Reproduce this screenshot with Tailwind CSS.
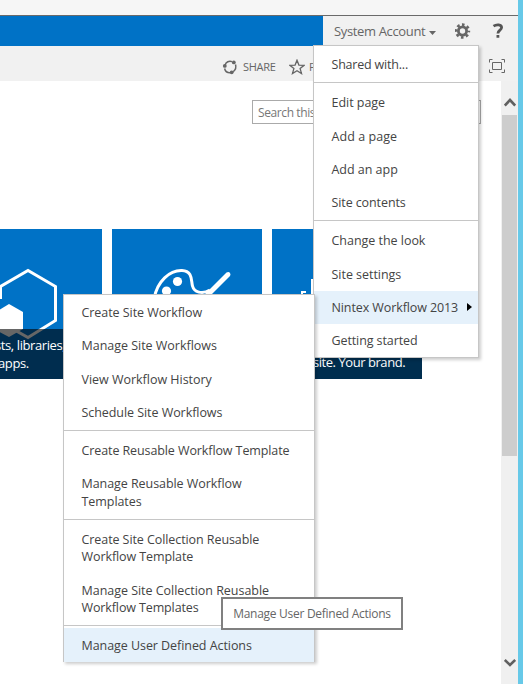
<!DOCTYPE html>
<html lang="en">
<head>
<meta charset="utf-8">
<title>Site settings menu</title>
<script src="https://cdn.jsdelivr.net/npm/@tailwindcss/browser@4"></script>
</head>
<body class="relative flex h-[684px] w-[523px] overflow-hidden bg-white font-['Open_Sans','Noto_Sans',sans-serif] text-[12.5px] text-[#444]">
<div class="flex w-[518px] flex-col">
  <div class="h-4 shrink-0 border-b border-[#6a6a6a] bg-[#f6f6f6]"></div>
  <header class="flex h-[30px] shrink-0 bg-[#f1f1f1]">
    <div class="w-[323px] bg-[#0072c6]"></div>
    <div class="flex flex-1 items-center pl-[11px] text-[#666]">
      <span class="w-[95px] whitespace-nowrap text-[13px] leading-[18px] tracking-[-0.35px]">System Account</span>
      <svg class="mt-[3px] h-1 w-[7px]" viewBox="0 0 7 4"><path d="M0 0h7L3.500 4z" fill="#666"/></svg>
      <svg class="ml-[19px] h-4 w-4" viewBox="0 0 16 16" fill="none" stroke="#666"><circle cx="7.500" cy="8" r="4.100" stroke-width="2.800"/><circle cx="7.500" cy="8" r="6.400" stroke-width="2.600" stroke-dasharray="2.600 2.426" stroke-dashoffset="1.300"/></svg>
      <svg class="ml-[21px] h-4 w-3" viewBox="0 0 12 16" fill="none" stroke="#555" stroke-width="2.800"><path d="M1.500 3.200C4.500 1.200 9.600 1.300 9.600 4.600C9.600 7.200 5.900 7.300 5.900 10.600M5.900 12v2.700"/></svg>
    </div>
  </header>
  <div class="flex h-[35px] shrink-0 items-center bg-[#f1f1f1] pl-[222px] text-[11px] text-[#666]">
    <svg class="mt-[7px] h-4 w-4" viewBox="0 0 16 16" fill="none" stroke="#666"><path d="M3.100 6C4 2.800 7 1.700 10 2.600M13.500 5.500C14.500 8.500 13.200 11 11.200 12.700M8.500 13.800C5.500 14 3.300 12.500 2.600 9.500" stroke-width="1.500"/><g fill="#666" stroke="none"><circle cx="11.800" cy="3.400" r="1.900"/><circle cx="2.800" cy="6.900" r="1.900"/><circle cx="9.700" cy="13.300" r="1.900"/></g></svg>
    <span class="ml-[5px] mt-[7px] w-[46px] tracking-[-0.3px]">SHARE</span>
    <svg class="mt-[7px] h-4 w-4 shrink-0" viewBox="0 0 16 16" fill="none" stroke="#666" stroke-width="1.300"><path d="M8 1.200l1.900 4.900 5.200.2-4 3.200 1.400 5L8 11.700l-4.500 2.800 1.400-5-4-3.200 5.200-.2z"/></svg>
    <span class="ml-[4px] mt-[7px] w-[180px] shrink-0">F</span>
    <svg class="mt-[5px] h-[14px] w-4 shrink-0" viewBox="0 0 16 14" fill="none" stroke="#666"><path d="M.5 3.500v-3h3M12.500.5h3v3M15.500 10.500v3h-3M3.500 13.500h-3v-3M3.500 3.500h9v7h-9z"/></svg>
  </div>
  <div class="flex min-h-0 flex-1">
    <main class="flex w-[501px] flex-col overflow-hidden">
      <div class="ml-[252px] mt-[19px] flex h-6 w-[229px] items-center border border-[#aaa] pl-[5px] text-[12px] tracking-[-0.4px] text-[#777]"><span class="mt-[2px]">Search this</span></div>
      <div class="mt-[105px] flex gap-[10px] text-white">
        <section class="flex h-[150px] w-[102px] flex-col bg-[#0072c6]">
          <div class="h-[100px]">
            <svg class="h-[120px] w-[102px]" viewBox="0 0 102 120" fill="none" stroke="#fff" stroke-width="3"><path d="M.5 70V57.500L28 41.500l27.500 16v34L28 108.500 .5 93"/><path d="M-6 84l15-9 14 8v17L9 108l-15-8z" fill="#fff" stroke="none"/></svg>
          </div>
          <div class="relative h-[50px] bg-black/60">
            <p class="pt-[7px] text-[13px] leading-[18px] whitespace-nowrap"><span class="ml-[-5px] tracking-[-0.4px]">sts, libraries,</span><br><span class="ml-[-2px] tracking-[-0.4px]">apps.</span></p>
          </div>
        </section>
        <section class="flex h-[150px] w-[150px] flex-col justify-between bg-[#0072c6]">
          <svg class="h-[100px] w-[150px]" viewBox="0 0 150 100" fill="none" stroke="#fff" stroke-width="3"><path d="M42 70C45 52 58 41 70 41.500C81 42 79 52 80.500 57C82 63 90 66 98 61"/><path d="M91 67L114.500 43.500q2.500-1 3.500 0.500t0 3L98 67z" fill="#fff" stroke="none"/><circle cx="65.500" cy="52.500" r="4.600" fill="#fff" stroke="none"/><circle cx="54.500" cy="62" r="4.600" fill="#fff" stroke="none"/></svg>
          <div class="h-[50px] bg-[#002e4f]"></div>
        </section>
        <section class="flex h-[150px] w-[150px] flex-col justify-between bg-[#0072c6]">
          <svg class="h-[100px] w-[150px]" viewBox="0 0 150 100" fill="#fff"><path d="M29 62h5v2h-3v6h-2zM39 50h5v20h-5z"/></svg>
          <div class="h-[50px] bg-[#002e4f] pl-[41px] pt-[24px] text-[13px] leading-[18px] whitespace-nowrap tracking-[-0.45px]"><span>site. Your brand.</span></div>
        </section>
      </div>
    </main>
    <div class="flex w-[17px] flex-col items-center bg-[#f0f0f0]">
      <svg class="mt-[15px] mb-px h-[18px] w-3" viewBox="0 0 12 18" fill="none" stroke="#606060" stroke-width="2.600"><path d="M.8 9.500L6 4l5.200 5.500"/></svg>
      <div class="h-[341px] w-[15px] bg-[#cdcdcd]"></div>
      <div class="flex-1"></div>
      <svg class="mb-4 h-3 w-3" viewBox="0 0 12 12" fill="none" stroke="#606060" stroke-width="2.600"><path d="M.8 4L6 9l5.200-5"/></svg>
    </div>
  </div>
</div>
<div class="w-[5px] bg-[#67c9e8]"></div>

<nav class="absolute left-[313px] top-[45px] h-[313px] w-[166px] border border-[#c6c6c6] bg-white pt-[2px] leading-[17.33px] whitespace-nowrap shadow-[2px_2px_3px_rgba(0,0,0,0.2)] tracking-[-0.03px]">
  <div class="h-[33.33px] py-2 pl-[17.5px]"><span class="tracking-[-0.2px]">Shared with...</span></div>
  <div class="mt-[1px] mb-[3px] h-px bg-[#c6c6c6]"></div>
  <div class="h-[33.33px] py-2 pl-[17.5px]"><span>Edit page</span></div>
  <div class="h-[33.33px] py-2 pl-[17.5px]"><span class="tracking-[0.05px]">Add a page</span></div>
  <div class="h-[33.33px] py-2 pl-[17.5px]"><span>Add an app</span></div>
  <div class="h-[33.33px] py-2 pl-[17.5px]"><span class="tracking-[-0.1px]">Site contents</span></div>
  <div class="mb-[3px] h-px bg-[#c6c6c6]"></div>
  <div class="h-[34px] py-2 pl-[17.5px]"><span>Change the look</span></div>
  <div class="h-[33px] py-2 pl-[17.5px]"><span>Site settings</span></div>
  <div class="flex h-[33px] items-center justify-between bg-[#e5f1fb] pl-[17.5px] pr-[6px]"><span class="pt-px tracking-[-0.1px]">Nintex Workflow 2013</span><svg class="h-2 w-[5px]" viewBox="0 0 5 8"><path d="M0 0l5 4-5 4z"/></svg></div>
  <div class="h-[33px] py-2 pl-[17.5px]"><span class="tracking-[-0.1px]">Getting started</span></div>
</nav>

<nav class="absolute left-[63px] top-[294px] h-[368px] w-[252px] border border-[#c6c6c6] bg-white pt-px leading-[17.33px] whitespace-nowrap shadow-[2px_2px_3px_rgba(0,0,0,0.2)] tracking-[-0.06px]">
  <div class="h-[33.33px] py-2 pl-[17.5px]"><span>Create Site Workflow</span></div>
  <div class="h-[33.33px] py-2 pl-[17.5px]"><span class="tracking-[-0.02px]">Manage Site Workflows</span></div>
  <div class="h-[33.33px] py-2 pl-[17.5px]"><span class="tracking-[-0.02px]">View Workflow History</span></div>
  <div class="h-[33.33px] py-2 pl-[17.5px]"><span>Schedule Site Workflows</span></div>
  <div class="mt-[1px] mb-[2.5px] h-px bg-[#c6c6c6]"></div>
  <div class="h-[33.33px] py-2 pl-[17.5px]"><span class="tracking-[-0.1px]">Create Reusable Workflow Template</span></div>
  <div class="h-[51px] py-2 pl-[17.5px] leading-[18px]"><span>Manage Reusable Workflow</span><br><span>Templates</span></div>
  <div class="mt-[1px] mb-[2.500px] h-px bg-[#c6c6c6]"></div>
  <div class="h-[51px] py-2 pl-[17.5px]"><span class="tracking-[-0.08px]">Create Site Collection Reusable</span><br><span class="tracking-[-0.09px]">Workflow Template</span></div>
  <div class="h-[50.32px] pb-2 pt-[8.5px] pl-[17.5px] leading-[17px]"><span class="tracking-[-0.03px]">Manage Site Collection Reusable</span><br><span class="tracking-[-0.12px]">Workflow Templates</span></div>
  <div class="mt-[1px] mb-[2px] h-px bg-[#c6c6c6]"></div>
  <div class="h-[34px] bg-[#e5f1fb] pb-2 pt-[9px] pl-[17.5px]"><span>Manage User Defined Actions</span></div>
</nav>
<div class="absolute left-[221px] top-[597px] flex h-[33px] w-[182px] items-center justify-center border-2 border-[#808080] bg-white text-[12px] tracking-[-0.28px] whitespace-nowrap text-[#666]"><span class="mt-px">Manage User Defined Actions</span></div>
</body>
</html>
